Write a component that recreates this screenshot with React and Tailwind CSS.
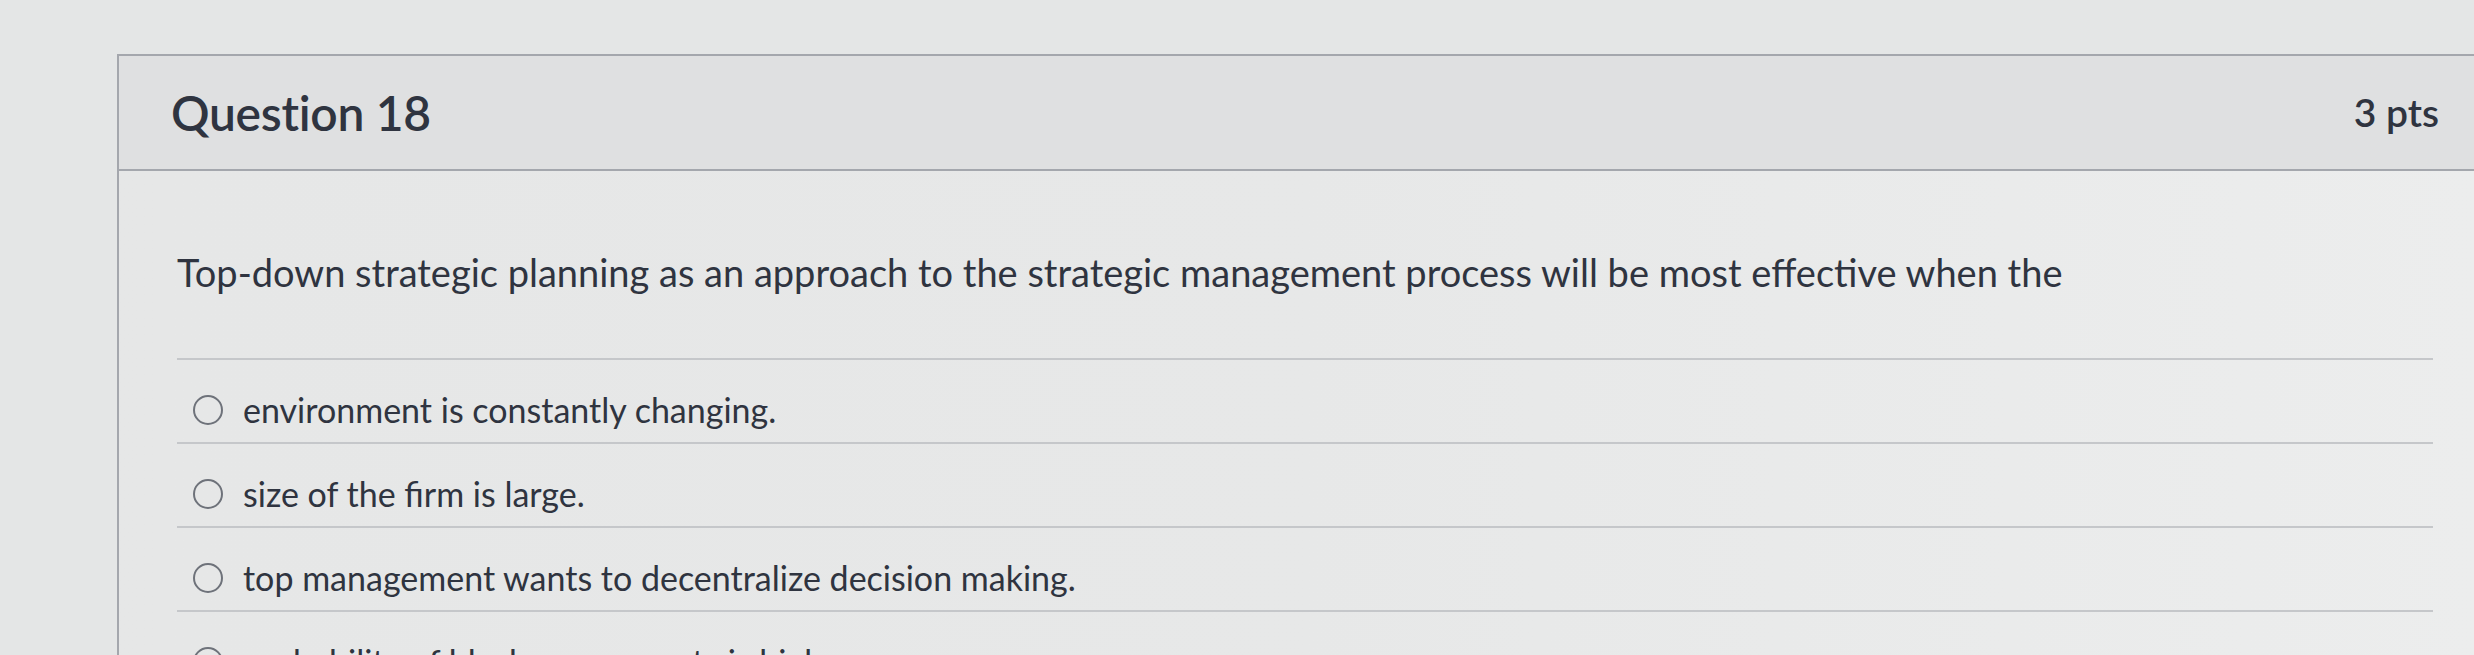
export default function App() {
    const options = [
        'environment is constantly changing.',
        'size of the firm is large.',
        'top management wants to decentralize decision making.',
        'probability of black swan events is high.',
    ];

    return (
        <div className="w-full h-[655px] overflow-hidden bg-[#e4e6e6] pt-[54px] pl-[117px] font-['Lato','Liberation_Sans',sans-serif] text-[#2f3440]">
            <div className="border-l-2 border-t-2 border-[#a4a7ad] bg-gradient-to-r from-[#e6e7e7] via-[#e7e8e8] to-[#eceded]">
                <div className="h-[115px] flex items-center justify-between pl-[52px] pr-[35px] bg-[#dfe0e1] border-b-2 border-[#a4a7ad]">
                    <h2 className="text-[48px] font-semibold tracking-[-0.3px]">Question 18</h2>
                    <span className="text-[39px] font-semibold">3 pts</span>
                </div>

                <div className="pl-[58px] pr-[41px]">
                    <p className="pt-[78px] pb-[63px] text-[38px] leading-[46px] border-b-2 border-[#c5c7ca]">
                        Top-down strategic planning as an approach to the strategic management process will be most effective when the
                    </p>
                    {options.map((text) => (
                        <Option key={text}>{text}</Option>
                    ))}
                </div>
            </div>
        </div>
    );
}

function Option({ children }) {
    return (
        <label className="h-[84px] flex items-center gap-[20px] pt-[18px] pl-[16px] border-b-2 border-[#c5c7ca]">
            <span className="w-[30px] h-[30px] rounded-full border-2 border-[#6e727a] shrink-0" />
            <span className="text-[34px] leading-[40px]">{children}</span>
        </label>
    );
}
